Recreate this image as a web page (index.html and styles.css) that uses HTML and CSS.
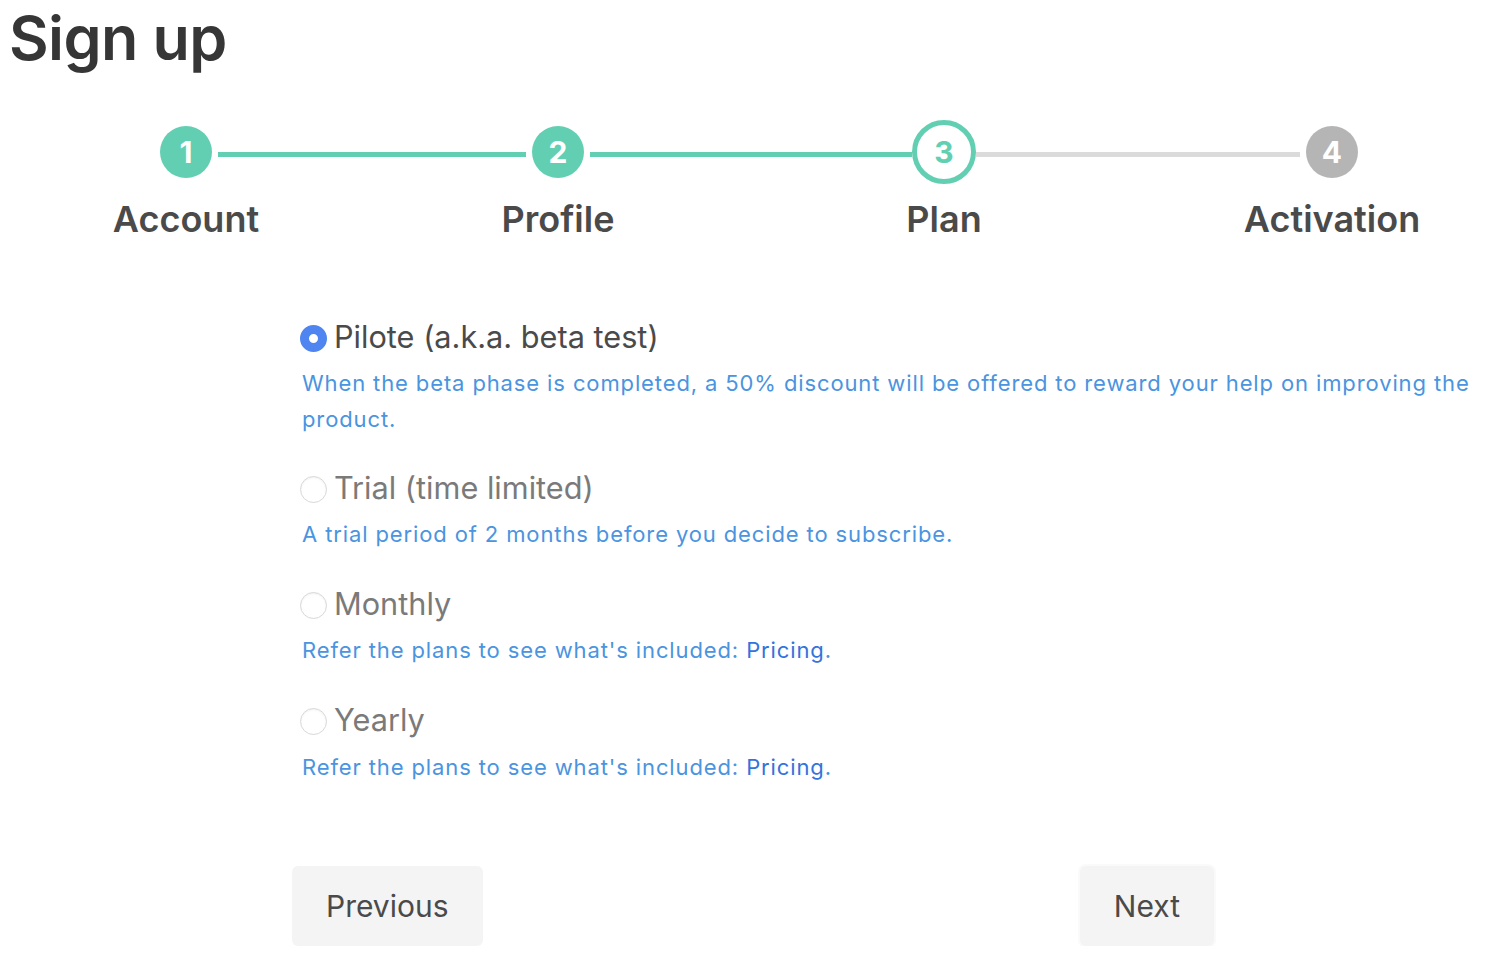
FILE: index.html
```html
<!DOCTYPE html>
<html lang="en">
<head>
<meta charset="utf-8">
<title>Sign up</title>
<link rel="stylesheet" href="styles.css">
</head>
<body>
<h1 class="title">Sign up</h1>

<div class="steps">
  <div class="step done">
    <div class="marker">1</div>
    <div class="label">Account</div>
  </div>
  <div class="connector done c1"></div>
  <div class="step done">
    <div class="marker">2</div>
    <div class="label">Profile</div>
  </div>
  <div class="connector done c2"></div>
  <div class="step active">
    <div class="marker">3</div>
    <div class="label">Plan</div>
  </div>
  <div class="connector c3"></div>
  <div class="step todo">
    <div class="marker">4</div>
    <div class="label">Activation</div>
  </div>
</div>

<form class="plans">
  <div class="option">
    <label class="choice selected"><span class="radio checked"></span>Pilote (a.k.a. beta test)</label>
    <p class="help">When the beta phase is completed, a 50% discount will be offered to reward your help on improving the product.</p>
  </div>
  <div class="option">
    <label class="choice"><span class="radio"></span>Trial (time limited)</label>
    <p class="help">A trial period of 2 months before you decide to subscribe.</p>
  </div>
  <div class="option">
    <label class="choice"><span class="radio"></span>Monthly</label>
    <p class="help">Refer the plans to see what's included: <a href="#">Pricing</a>.</p>
  </div>
  <div class="option">
    <label class="choice"><span class="radio"></span>Yearly</label>
    <p class="help">Refer the plans to see what's included: <a href="#">Pricing</a>.</p>
  </div>
</form>

<div class="actions">
  <button class="button" type="button">Previous</button>
  <button class="button next" type="button">Next</button>
</div>
</body>
</html>
```

FILE: styles.css
```css
html, body {
  margin: 0;
  padding: 0;
  background: #ffffff;
}
body {
  font-family: Inter, "Liberation Sans", sans-serif;
  color: #4a4a4a;
  width: 1498px;
  overflow: hidden;
}

.title {
  margin: 0;
  padding: 0 0 0 9px;
  font-size: 61px;
  line-height: 76px;
  font-weight: 600;
  letter-spacing: -0.6px;
  color: #363636;
}

/* steps */
.steps {
  display: flex;
  align-items: flex-start;
  padding-left: 160px;
  margin-top: 50px;
  height: 140px;
}
.step {
  display: flex;
  flex-direction: column;
  align-items: center;
  width: 52px;
}
.marker {
  width: 52px;
  height: 52px;
  border-radius: 50%;
  box-sizing: border-box;
  display: flex;
  align-items: center;
  justify-content: center;
  font-size: 30px;
  font-weight: 700;
  color: #ffffff;
  background: #62cfb2;
}
.step.todo .marker {
  background: #b5b5b5;
}
.step.active {
  width: 64px;
  margin-top: -6px;
}
.step.active .marker {
  width: 64px;
  height: 64px;
  background: #ffffff;
  border: 5px solid #62cfb2;
  color: #62cfb2;
}
.label {
  white-space: nowrap;
  margin-top: 19px;
  font-size: 36px;
  line-height: 44px;
  font-weight: 600;
  color: #4a4a4a;
}
.step.active .label {
  margin-top: 13px;
}
.connector {
  height: 5px;
  margin-top: 26px;
  background: #dbdbdb;
}
.connector.done {
  background: #62cfb2;
}
.c1 { width: 308px; margin-left: 6px; margin-right: 6px; }
.c2 { width: 322px; margin-left: 6px; }
.c3 { width: 324px; margin-right: 6px; }

/* plan options */
.plans {
  margin: 50px 0 0 300px;
  width: 1190px;
}
.option {
  margin-bottom: 31px;
}
.option:first-child {
  margin-bottom: 30px;
}
.choice {
  display: flex;
  align-items: center;
  height: 40px;
  font-size: 30.7px;
  color: #7a7a7a;
  cursor: pointer;
}
.choice.selected {
  color: #4a4a4a;
}
.radio {
  flex: none;
  width: 27px;
  height: 27px;
  box-sizing: border-box;
  border-radius: 50%;
  border: 1px solid #d8d8d8;
  background: #ffffff;
  margin: 4px 7px 0 0;
  box-shadow: inset 0 1px 2px rgba(0, 0, 0, 0.06);
}
.radio.checked {
  border: 9.5px solid #4f85f0;
  background: #ffffff;
  box-shadow: none;
}
.help {
  margin: 9px 0 0 2px;
  font-size: 22px;
  line-height: 36px;
  letter-spacing: 0.88px;
  color: #4a94e0;
}
.option:last-child .help {
  margin-top: 10px;
}
.help a {
  color: #3273dc;
  text-decoration: none;
}

/* buttons */
.actions {
  display: flex;
  justify-content: space-between;
  margin: 81px 0 0 292px;
  width: 922px;
}
.button {
  font-family: inherit;
  height: 80px;
  padding: 0 34px;
  border: none;
  border-radius: 6px;
  background: #f4f4f4;
  font-size: 30px;
  color: #4a4a4a;
  cursor: pointer;
}
.button.next {
  box-shadow: 0 0 0 2px #fafafa;
}
```
